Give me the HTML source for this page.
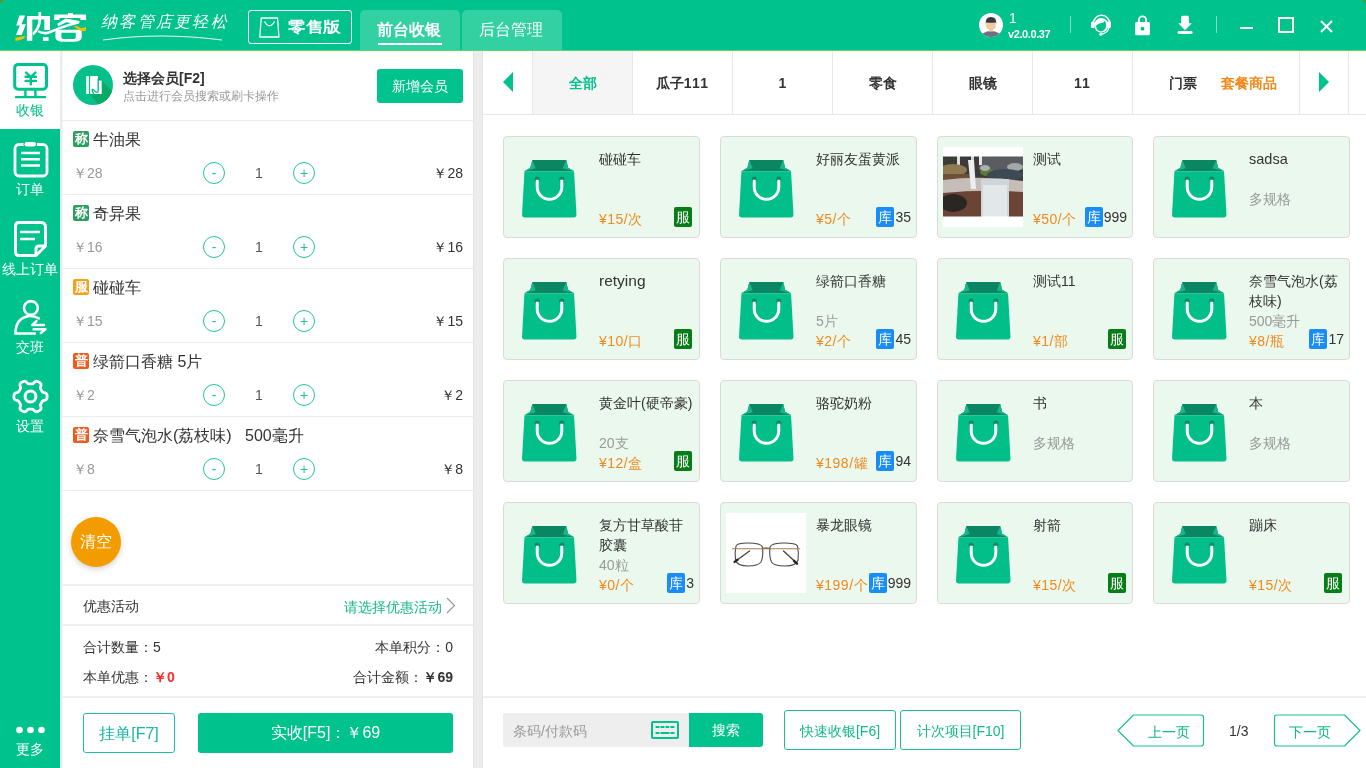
<!DOCTYPE html>
<html><head><meta charset="utf-8"><style>
*{margin:0;padding:0;box-sizing:border-box;}
html,body{width:1366px;height:768px;overflow:hidden;background:#fff;font-family:"Liberation Sans",sans-serif;color:#333;}
.a{position:absolute;}
.t{position:absolute;white-space:nowrap;line-height:20px;}
.g{background:#ececec;}
.card{position:absolute;width:197px;height:102px;background:#ebf8ee;border:1px solid #dadada;border-radius:4px;}
.card .nm{position:absolute;left:95px;top:12px;width:96px;font-size:14px;line-height:20px;color:#333;white-space:normal;}
.card .sp{position:absolute;left:95px;top:52px;font-size:14px;line-height:20px;color:#999;white-space:nowrap;}
.card .pr{position:absolute;left:95px;top:72px;font-size:14px;line-height:20px;color:#f0891e;white-space:nowrap;letter-spacing:0.5px;}
.card .bag{position:absolute;left:18px;top:23px;}
.card .fu{position:absolute;left:170px;top:70px;width:18px;height:20px;background:#067d17;border-radius:2px;color:#fff;font-size:14px;line-height:20px;text-align:center;}
.card .ku{position:absolute;right:5px;top:70px;height:20px;white-space:nowrap;font-size:14px;line-height:20px;color:#333;}
.card .ku b{display:inline-block;width:18px;height:20px;background:#1a8cf5;border-radius:2px;color:#fff;font-size:14px;line-height:20px;text-align:center;font-weight:normal;margin-right:1px;vertical-align:top;}
.row{position:absolute;left:62px;width:411px;height:74px;border-bottom:1px solid #ececec;}
.row .bd{position:absolute;left:11px;top:10px;width:16px;height:16px;border-radius:2px;color:#fff;font-size:13px;line-height:16px;text-align:center;font-weight:bold;}
.row .nm{position:absolute;left:31px;top:9px;font-size:16px;line-height:20px;color:#333;white-space:nowrap;}
.row .up{position:absolute;left:11px;top:42px;font-size:14px;line-height:20px;color:#999;white-space:nowrap;}
.row .mi,.row .pl{position:absolute;top:41px;width:22px;height:22px;border:1px solid #20c49a;border-radius:50%;color:#20c49a;text-align:center;font-size:14px;line-height:20px;}
.row .mi{left:141px;}
.row .pl{left:231px;}
.row .q{position:absolute;left:193px;top:42px;font-size:14px;line-height:20px;color:#555;}
.row .tp{position:absolute;right:10px;top:42px;font-size:14px;line-height:20px;color:#333;white-space:nowrap;}
.tab{position:absolute;top:51px;height:63px;border-right:1px solid #e8e8e8;font-size:14px;font-weight:bold;line-height:65px;text-align:center;color:#333;}
.stx{position:absolute;left:0;width:60px;text-align:center;color:#fff;font-size:14px;line-height:14px;white-space:nowrap;}
</style></head><body><div id="root" style="position:absolute;left:0;top:0;width:1366px;height:768px;overflow:hidden;will-change:transform;-webkit-font-smoothing:antialiased;">
<div class="a" style="left:0;top:0;width:6px;height:6px;background:#6c8c0c;"></div><div class="a" style="left:1360px;top:0;width:6px;height:6px;background:#6c8c0c;"></div>
<div class="a" style="left:0;top:0;width:1366px;height:51px;background:#00c28c;border-radius:5px 5px 0 0;"></div>
<svg class="a" style="left:0;top:0;" width="100" height="50" viewBox="0 0 100 50"><g fill="#fff"><path d="M19.4,15.4 H25.1 L21.4,24.3 H25.9 L21.7,34.9 H16 L19.8,25.6 H16.2 Z"/><path d="M27,16 H50 V30 H44.3 V19.6 H32.3 V40.8 H26.9 Z"/><path d="M38.4,12 H41.2 V19 Q41,29 33.5,35.5 L32.3,33 Q38.4,27 38.4,19 Z"/><rect x="42.9" y="37.2" width="5.7" height="3.7"/><rect x="68" y="13" width="4.8" height="3"/><path d="M54.2,14.4 H86.1 V20.1 H80.4 V17.9 H59.6 V20.1 H54.2 Z"/><path d="M57.2,23.8 L65.8,18.6 L79.5,21 L79.2,23.6 Q62,28 50,33.5 Q43,36 37.5,32 L38.8,30.3 Q43.5,33 49,31 Q60,26.5 71,23 L66.2,22.2 L58.5,26.3 Z"/><path d="M55.4,29.8 H81.7 V37 Q81.7,41.8 74,41.8 H63 Q55.4,41.8 55.4,37 Z M61.4,32.8 V37.5 Q61.4,39 64,39 H73 Q75.7,39 75.7,37.5 V32.8 Z" fill-rule="evenodd"/></g><g fill="#f5c000"><path d="M15.2,37.9 Q20,36.8 25.4,36 L24,38.6 Q20,40.2 15.5,41 Z"/><path d="M73.7,26 Q77,25.3 80,27.8 Q83,28.5 86.1,26.8 L85.8,30.8 Q81,31.5 78.5,29.8 Q76,28 73.7,26 Z"/></g></svg>
<div class="t" style="left:101px;top:12px;font-family:'Liberation Serif',serif;font-style:italic;font-size:16px;line-height:20px;color:#fff;letter-spacing:2.3px;">纳客管店更轻松</div>
<svg class="a" style="left:100px;top:33px;" width="130" height="10" viewBox="0 0 130 10"><path d="M3,7 Q60,-1 122,7" stroke="#fff" stroke-width="1.2" fill="none" opacity="0.9"/></svg>
<div class="a" style="left:248px;top:10px;width:104px;height:34px;border:1px solid #fff;border-radius:3px;"></div>
<svg class="a" style="left:259px;top:17px;" width="21" height="21" viewBox="0 0 21 21"><path d="M2.2,1 H18.6 L19.9,20 H0.8 Z" stroke="#fff" stroke-width="1.3" fill="none" stroke-linejoin="round"/><path d="M5.5,4.5 Q10.4,13 15.6,4.5" stroke="#fff" stroke-width="1.3" fill="none"/></svg>
<div class="t" style="left:288px;top:17px;font-size:15px;line-height:20px;font-weight:bold;color:#fff;transform:scaleX(1.18);transform-origin:0 0;">零售版</div>
<div class="a" style="left:360px;top:10px;width:100px;height:41px;background:#33d1a2;border-radius:5px 5px 0 0;"></div>
<div class="a" style="left:462px;top:10px;width:100px;height:41px;background:#33d1a2;border-radius:5px 5px 0 0;"></div>
<div class="t" style="left:377px;top:20px;font-size:16px;line-height:20px;font-weight:bold;color:#fff;">前台收银</div>
<div class="a" style="left:378px;top:43px;width:64px;height:2px;background:#fff;"></div>
<div class="t" style="left:479px;top:20px;font-size:16px;line-height:20px;color:#fff;">后台管理</div>
<div class="a" style="left:0;top:50px;width:1366px;height:1px;background:#55d872;"></div>
<svg class="a" style="left:979px;top:13px;" width="24" height="24" viewBox="0 0 24 24"><defs><clipPath id="avc"><circle cx="12" cy="12" r="12"/></clipPath></defs><circle cx="12" cy="12" r="12" fill="#fff"/><g clip-path="url(#avc)"><ellipse cx="12" cy="26" rx="11" ry="8" fill="#6e6f80"/><rect x="10.2" y="15" width="3.6" height="3.6" fill="#f3c59c"/><ellipse cx="11.9" cy="12.6" rx="4.9" ry="4.5" fill="#f5c9a0"/><path d="M6.8,11.8 Q5.8,4.1 12,4.1 Q18,4.1 17.2,11.5 L16.6,9.6 Q12,10.2 7.4,9.4 Z" fill="#3a3a3c"/></g></svg>
<div class="t" style="left:1009px;top:8px;font-size:14px;line-height:20px;color:#fff;">1</div>
<div class="t" style="left:1008px;top:27px;font-size:11px;line-height:14px;color:#fff;font-weight:bold;letter-spacing:-0.4px;">v2.0.0.37</div>
<div class="a" style="left:1070px;top:16px;width:1px;height:17px;background:#7fe0c0;"></div>
<svg class="a" style="left:1085px;top:10px;" width="32" height="30" viewBox="0 0 32 30"><path d="M8,14.5 A8.5,9.2 0 0 1 25,14.5" stroke="#fff" stroke-width="1.6" fill="none"/><rect x="6" y="11.7" width="3.6" height="6.4" rx="1" fill="#fff"/><rect x="22" y="11.5" width="3.8" height="6.6" rx="1" fill="#fff"/><circle cx="16.3" cy="15.3" r="7.2" fill="#fff"/><path d="M11.2,15.3 Q14,13 18.5,12.5 L19.8,10.8 Q21.2,13 21,15.5 Q20.8,20.5 16.2,21.5 Q11.5,21 11.2,16.5 Z" fill="#00c28c"/><path d="M24,17.5 Q23.2,22.8 16.5,24.2" stroke="#fff" stroke-width="1.4" fill="none"/><circle cx="15.8" cy="24.2" r="1.6" fill="#fff"/></svg>
<svg class="a" style="left:1134px;top:15px;" width="17" height="21" viewBox="0 0 17 21"><path d="M4.9,7.8 V5 A3.6,3.6 0 0 1 12.1,5 V7.8" stroke="#fff" stroke-width="1.9" fill="none"/><rect x="1.1" y="7.1" width="14.8" height="13.1" rx="1.2" fill="#fff"/><circle cx="8.5" cy="13.7" r="1.9" fill="#00c28c"/></svg>
<svg class="a" style="left:1177px;top:15px;" width="16" height="20" viewBox="0 0 16 20"><path d="M4.2,2.2 Q4.2,0.8 5.6,0.8 H10.5 Q11.9,0.8 11.9,2.2 V8.2 H14.8 L8,15.3 L1.3,8.2 H4.2 Z" fill="#fff"/><rect x="0.6" y="16.1" width="15" height="2.9" rx="1.4" fill="#fff"/></svg>
<div class="a" style="left:1216px;top:16px;width:1px;height:17px;background:#7fe0c0;"></div>
<div class="a" style="left:1240px;top:27px;width:13px;height:2px;background:#fff;"></div>
<div class="a" style="left:1278px;top:17px;width:16px;height:16px;border:2px solid #fffbe6;"></div>
<svg class="a" style="left:1320px;top:20px;" width="13" height="13" viewBox="0 0 13 13"><path d="M1,1 L12,12 M12,1 L1,12" stroke="#fff" stroke-width="2"/></svg>
<div class="a" style="left:0;top:51px;width:60px;height:717px;background:#00c28c;"></div>
<div class="a" style="left:0;top:51px;width:60px;height:78px;background:#fff;"></div>
<div class="a g" style="left:60px;top:51px;width:2px;height:717px;"></div>
<svg class="a" style="left:13px;top:62px;" width="36" height="37" viewBox="0 0 36 37"><rect x="1.7" y="2.4" width="31.8" height="24.9" rx="3.5" stroke="#00c28c" stroke-width="3" fill="none"/><path d="M13.2,10.6 L17.8,15 L22.4,10.6 M17.8,15 V22.3 M12.6,14.8 H23 M12.6,18.9 H23" stroke="#00c28c" stroke-width="2.4" fill="none" stroke-linecap="round" stroke-linejoin="round"/><path d="M12.4,28 V34.5 M22.4,28 V34.5" stroke="#00c28c" stroke-width="2.4"/><rect x="1.9" y="34" width="31.3" height="2.2" rx="1" fill="#00c28c"/></svg>
<div class="stx" style="top:103px;color:#00c28c;">收银</div>
<svg class="a" style="left:13px;top:141px;" width="36" height="37" viewBox="0 0 36 37"><rect x="2" y="3.5" width="32" height="31.5" rx="4" stroke="#fff" stroke-width="2.8" fill="none"/><rect x="10.5" y="0" width="13.5" height="6.5" rx="3.2" fill="#00c28c"/><rect x="11.5" y="1" width="11.5" height="4.6" rx="2.3" fill="#fff"/><path d="M8,12 H27 M8,18.2 H27 M8,24.6 H27" stroke="#fff" stroke-width="2.5"/></svg>
<div class="stx" style="top:182px;">订单</div>
<svg class="a" style="left:14px;top:221px;" width="33" height="36" viewBox="0 0 33 36"><path d="M5,1.5 H27 Q31.5,1.5 31.5,6 V25 L22,34.5 H5 Q1.5,34.5 1.5,31 V5 Q1.5,1.5 5,1.5 Z" stroke="#fff" stroke-width="3" fill="none" stroke-linejoin="round"/><path d="M31.5,25 H25 Q22,25 22,28 V34.5" stroke="#fff" stroke-width="3" fill="none"/><path d="M6,11 H26 M6,18 H21" stroke="#fff" stroke-width="2.5"/></svg>
<div class="stx" style="top:262px;font-size:14px;">线上订单</div>
<svg class="a" style="left:8px;top:296px;" width="44" height="44" viewBox="8 296 44 44"><circle cx="30.9" cy="308" r="6.9" stroke="#fff" stroke-width="2.6" fill="none"/><path d="M38.9,318.4 Q34,315.6 29,316 Q15.5,318 15.5,333.5 H34.8" stroke="#fff" stroke-width="2.6" fill="none" stroke-linecap="round"/><path d="M44,325 H32.3 L36.6,321 M33.5,329.3 H45.5 L40.8,333" stroke="#fff" stroke-width="2.4" fill="none" stroke-linecap="round" stroke-linejoin="round"/></svg>
<div class="stx" style="top:340px;">交班</div>
<svg class="a" style="left:12px;top:378px;" width="37" height="37" viewBox="0 0 37 37"><path d="M35.10,18.50 L35.08,19.08 L35.04,19.66 L34.95,20.23 L34.78,20.79 L34.49,21.32 L33.97,21.79 L33.12,22.14 L32.09,22.40 L31.23,22.64 L30.68,22.93 L30.33,23.28 L30.07,23.65 L29.85,24.03 L29.63,24.42 L29.41,24.80 L29.19,25.18 L28.96,25.56 L28.75,25.94 L28.55,26.35 L28.43,26.83 L28.45,27.46 L28.67,28.32 L28.96,29.34 L29.08,30.25 L28.94,30.94 L28.62,31.46 L28.22,31.88 L27.77,32.24 L27.29,32.57 L26.80,32.88 L26.29,33.15 L25.77,33.40 L25.23,33.61 L24.66,33.75 L24.05,33.76 L23.39,33.54 L22.65,32.98 L21.92,32.22 L21.28,31.60 L20.75,31.26 L20.28,31.13 L19.82,31.09 L19.38,31.09 L18.94,31.10 L18.50,31.10 L18.06,31.10 L17.62,31.09 L17.18,31.09 L16.72,31.13 L16.25,31.26 L15.72,31.60 L15.08,32.22 L14.35,32.98 L13.61,33.54 L12.95,33.76 L12.34,33.75 L11.77,33.61 L11.23,33.40 L10.71,33.15 L10.20,32.88 L9.71,32.57 L9.23,32.24 L8.78,31.88 L8.38,31.46 L8.06,30.94 L7.92,30.25 L8.04,29.34 L8.33,28.32 L8.55,27.46 L8.57,26.83 L8.45,26.35 L8.25,25.94 L8.04,25.56 L7.81,25.18 L7.59,24.80 L7.37,24.42 L7.15,24.03 L6.93,23.65 L6.67,23.28 L6.32,22.93 L5.77,22.64 L4.91,22.40 L3.88,22.14 L3.03,21.79 L2.51,21.32 L2.22,20.79 L2.05,20.23 L1.96,19.66 L1.92,19.08 L1.90,18.50 L1.92,17.92 L1.96,17.34 L2.05,16.77 L2.22,16.21 L2.51,15.68 L3.03,15.21 L3.88,14.86 L4.91,14.60 L5.77,14.36 L6.32,14.07 L6.67,13.72 L6.93,13.35 L7.15,12.97 L7.37,12.58 L7.59,12.20 L7.81,11.82 L8.04,11.44 L8.25,11.06 L8.45,10.65 L8.57,10.17 L8.55,9.54 L8.33,8.68 L8.04,7.66 L7.92,6.75 L8.06,6.06 L8.38,5.54 L8.78,5.12 L9.23,4.76 L9.71,4.43 L10.20,4.12 L10.71,3.85 L11.23,3.60 L11.77,3.39 L12.34,3.25 L12.95,3.24 L13.61,3.46 L14.35,4.02 L15.08,4.78 L15.72,5.40 L16.25,5.74 L16.72,5.87 L17.18,5.91 L17.62,5.91 L18.06,5.90 L18.50,5.90 L18.94,5.90 L19.38,5.91 L19.82,5.91 L20.28,5.87 L20.75,5.74 L21.28,5.40 L21.92,4.78 L22.65,4.02 L23.39,3.46 L24.05,3.24 L24.66,3.25 L25.23,3.39 L25.77,3.60 L26.29,3.85 L26.80,4.12 L27.29,4.43 L27.77,4.76 L28.22,5.12 L28.62,5.54 L28.94,6.06 L29.08,6.75 L28.96,7.66 L28.67,8.68 L28.45,9.54 L28.43,10.17 L28.55,10.65 L28.75,11.06 L28.96,11.44 L29.19,11.82 L29.41,12.20 L29.63,12.58 L29.85,12.97 L30.07,13.35 L30.33,13.72 L30.68,14.07 L31.23,14.36 L32.09,14.60 L33.12,14.86 L33.97,15.21 L34.49,15.68 L34.78,16.21 L34.95,16.77 L35.04,17.34 L35.08,17.92 Z" stroke="#fff" stroke-width="2.8" fill="none" stroke-linejoin="round"/><circle cx="18.5" cy="18.5" r="5.4" stroke="#fff" stroke-width="3" fill="none"/></svg>
<div class="stx" style="top:419px;">设置</div>
<svg class="a" style="left:16px;top:726px;" width="29" height="8" viewBox="0 0 29 8"><circle cx="3.5" cy="4" r="3.3" fill="#fff"/><circle cx="14.5" cy="4" r="3.3" fill="#fff"/><circle cx="25.5" cy="4" r="3.3" fill="#fff"/></svg>
<div class="stx" style="top:742px;">更多</div>
<div class="a" style="left:62px;top:51px;width:1px;height:717px;background:#f3f3f3;"></div>
<svg class="a" style="left:73px;top:65px;" width="40" height="40" viewBox="0 0 40 40"><defs><clipPath id="mc"><circle cx="20" cy="20" r="20"/></clipPath></defs><circle cx="20" cy="20" r="20" fill="#05c08a"/><g clip-path="url(#mc)"><path d="M24.8,11.5 L28.7,15.6 L48,35 L33,50 L17.1,29 Z" fill="#07ab66"/></g><g fill="#fff"><rect x="13.2" y="11.1" width="2.7" height="18" rx="0.6"/><rect x="17.1" y="11.1" width="8" height="18" rx="0.8"/><rect x="24" y="15.6" width="4.7" height="13.4" rx="0.6"/></g><path d="M25.2,13.5 V25.5 Q25,28.5 22.6,26.8 L20.6,25 Q18.6,23.6 19.4,26.2 L21.2,29.8" stroke="#05c08a" stroke-width="1.4" fill="none"/></svg>
<div class="t" style="left:123px;top:68px;font-size:14px;line-height:20px;font-weight:bold;color:#333;">选择会员[F2]</div>
<div class="t" style="left:123px;top:87px;font-size:12px;line-height:18px;color:#999;">点击进行会员搜索或刷卡操作</div>
<div class="a" style="left:377px;top:69px;width:86px;height:34px;background:#00c28c;border-radius:3px;color:#fff;font-size:14px;line-height:34px;text-align:center;">新增会员</div>
<div class="a" style="left:62px;top:120px;width:411px;height:1px;background:#ececec;"></div>
<div class="row" style="top:121px;"><div class="bd" style="background:#2c9e5f;">称</div><div class="nm">牛油果</div><div class="up">￥28</div><div class="mi">-</div><div class="q">1</div><div class="pl">+</div><div class="tp">￥28</div></div>
<div class="row" style="top:195px;"><div class="bd" style="background:#2c9e5f;">称</div><div class="nm">奇异果</div><div class="up">￥16</div><div class="mi">-</div><div class="q">1</div><div class="pl">+</div><div class="tp">￥16</div></div>
<div class="row" style="top:269px;"><div class="bd" style="background:#f4a21c;">服</div><div class="nm">碰碰车</div><div class="up">￥15</div><div class="mi">-</div><div class="q">1</div><div class="pl">+</div><div class="tp">￥15</div></div>
<div class="row" style="top:343px;"><div class="bd" style="background:#f25a1c;">普</div><div class="nm">绿箭口香糖 5片</div><div class="up">￥2</div><div class="mi">-</div><div class="q">1</div><div class="pl">+</div><div class="tp">￥2</div></div>
<div class="row" style="top:417px;"><div class="bd" style="background:#f25a1c;">普</div><div class="nm">奈雪气泡水(荔枝味)&nbsp;&nbsp;&nbsp;500毫升</div><div class="up">￥8</div><div class="mi">-</div><div class="q">1</div><div class="pl">+</div><div class="tp">￥8</div></div>
<div class="a" style="left:71px;top:517px;width:50px;height:50px;border-radius:50%;background:#f39c00;box-shadow:0 2px 6px rgba(0,0,0,0.18);color:#fff;font-size:16px;line-height:50px;text-align:center;">清空</div>
<div class="a" style="left:62px;top:584px;width:411px;height:2px;background:#efefef;"></div>
<div class="t" style="left:83px;top:596px;font-size:14px;line-height:20px;color:#333;">优惠活动</div>
<div class="t" style="left:344px;top:597px;font-size:14px;line-height:20px;color:#13b98a;">请选择优惠活动</div>
<svg class="a" style="left:446px;top:597px;" width="10" height="17" viewBox="0 0 10 17"><path d="M1,1 L8.5,8.5 L1,16" stroke="#999" stroke-width="1.2" fill="none"/></svg>
<div class="a" style="left:62px;top:624px;width:411px;height:2px;background:#efefef;"></div>
<div class="t" style="left:83px;top:637px;font-size:14px;line-height:20px;color:#333;">合计数量：5</div>
<div class="t" style="right:913px;top:637px;font-size:14px;line-height:20px;color:#333;">本单积分：0</div>
<div class="t" style="left:83px;top:667px;font-size:14px;line-height:20px;color:#333;">本单优惠：<b style="color:#ff2b2b;">￥0</b></div>
<div class="t" style="right:913px;top:667px;font-size:14px;line-height:20px;color:#333;">合计金额：<b>￥69</b></div>
<div class="a" style="left:62px;top:696px;width:411px;height:2px;background:#efefef;"></div>
<div class="a" style="left:83px;top:713px;width:92px;height:40px;border:1px solid #1cbfae;border-radius:3px;color:#16b7a5;font-size:16px;line-height:40px;text-align:center;">挂单[F7]</div>
<div class="a" style="left:198px;top:713px;width:255px;height:40px;background:#00c28c;border-radius:3px;color:#fff;font-size:16px;line-height:40px;text-align:center;">实收[F5]：￥69</div>
<div class="a g" style="left:473px;top:51px;width:10px;height:717px;border-left:1px solid #e2e2e2;border-right:1px solid #e2e2e2;"></div>
<div class="a" style="left:483px;top:114px;width:883px;height:1px;background:#e8e8e8;"></div>
<div class="tab" style="left:483px;width:50px;"></div>
<svg class="a" style="left:503px;top:72px;" width="11" height="20" viewBox="0 0 11 20"><path d="M10,0 V20 L0,10 Z" fill="#00c28c"/></svg>
<div class="tab" style="left:533px;width:100px;background:#f5f5f5;color:#00c28c;">全部</div>
<div class="tab" style="left:633px;width:100px;">瓜子<span style="letter-spacing:1.2px">111</span></div>
<div class="tab" style="left:733px;width:100px;">1</div>
<div class="tab" style="left:833px;width:100px;">零食</div>
<div class="tab" style="left:933px;width:100px;">眼镜</div>
<div class="tab" style="left:1033px;width:100px;"><span style="letter-spacing:1px">11</span></div>
<div class="tab" style="left:1133px;width:167px;text-align:left;"><span style="position:absolute;left:36px;">门票</span><span style="position:absolute;left:88px;color:#f08a1c;">套餐商品</span></div>
<div class="tab" style="left:1300px;width:49px;"></div>
<svg class="a" style="left:1319px;top:72px;" width="11" height="20" viewBox="0 0 11 20"><path d="M0,0 V20 L10,10 Z" fill="#00c28c"/></svg>
<div class="card" style="left:503px;top:136px;width:197px;"><svg class="bag" width="55" height="58" viewBox="0 0 56 59" preserveAspectRatio="none"><path d="M10.5,0 H45 L47,8 L53,11.5 H2.5 L8.5,8 Z" fill="#0a8762"/><path d="M10.5,0 L14,8.5 L2.5,11.5 L8.5,8 Z" fill="#16b888"/><path d="M45,0 L41.5,8.5 L53,11.5 L47,8 Z" fill="#16b888"/><path d="M2.5,11.5 H53 L55.5,56 Q55.5,58.5 53,58.5 H2.5 Q0,58.5 0,56 Z" fill="#02bf8a"/><circle cx="15.5" cy="19.5" r="2.6" fill="#0a8a64"/><circle cx="40.5" cy="19.5" r="2.6" fill="#0a8a64"/><path d="M15.5,20 V27.5 A12.5,12.5 0 0 0 40.5,27.5 V20" stroke="#fff" stroke-width="3" fill="none"/></svg><div class="nm">碰碰车</div><div class="pr">¥15/次</div><div class="fu">服</div></div>
<div class="card" style="left:720px;top:136px;width:197px;"><svg class="bag" width="55" height="58" viewBox="0 0 56 59" preserveAspectRatio="none"><path d="M10.5,0 H45 L47,8 L53,11.5 H2.5 L8.5,8 Z" fill="#0a8762"/><path d="M10.5,0 L14,8.5 L2.5,11.5 L8.5,8 Z" fill="#16b888"/><path d="M45,0 L41.5,8.5 L53,11.5 L47,8 Z" fill="#16b888"/><path d="M2.5,11.5 H53 L55.5,56 Q55.5,58.5 53,58.5 H2.5 Q0,58.5 0,56 Z" fill="#02bf8a"/><circle cx="15.5" cy="19.5" r="2.6" fill="#0a8a64"/><circle cx="40.5" cy="19.5" r="2.6" fill="#0a8a64"/><path d="M15.5,20 V27.5 A12.5,12.5 0 0 0 40.5,27.5 V20" stroke="#fff" stroke-width="3" fill="none"/></svg><div class="nm">好丽友蛋黄派</div><div class="pr">¥5/个</div><div class="ku"><b>库</b>35</div></div>
<div class="card" style="left:937px;top:136px;width:196px;"><svg class="a" style="left:5px;top:10px;" width="80" height="80" viewBox="0 0 80 80"><defs><filter id="bl" x="0" y="0" width="1" height="1"><feGaussianBlur stdDeviation="0.7"/></filter><clipPath id="pc"><rect y="9.5" width="80" height="60"/></clipPath></defs><rect width="80" height="80" fill="#fff"/><g clip-path="url(#pc)" filter="url(#bl)"><rect y="9" width="80" height="62" fill="#3c3a38"/><rect x="36" y="9" width="44" height="14" fill="#5a5c5e"/><rect x="14" y="9" width="3" height="10" fill="#e0e0e0"/><rect x="28" y="9" width="3" height="9" fill="#d0d4d8"/><rect x="36" y="9" width="3" height="9" fill="#e8e8e8"/><ellipse cx="10" cy="23" rx="14" ry="6" fill="#8f7a52"/><rect x="0" y="27" width="28" height="6" fill="#6e5038"/><ellipse cx="44" cy="25" rx="7" ry="4" fill="#5e7a3a"/><ellipse cx="42" cy="21" rx="5" ry="3" fill="#a8b0b0"/><ellipse cx="72" cy="20" rx="8" ry="4" fill="#a0a8a8"/><ellipse cx="62" cy="28" rx="18" ry="6" fill="#3e4a52"/><path d="M0,33 Q40,28 80,34 V52 H0 Z" fill="#c6bcb8"/><path d="M0,46 Q40,42 80,45 V70 H0 Z" fill="#6a4436"/><ellipse cx="10" cy="56" rx="14" ry="9" fill="#2c2622"/><path d="M25,13 L31,13 L33,42 L28,42 Z" fill="#eceef0"/><rect x="38" y="32" width="28" height="38" fill="#cfd6da"/><rect x="40" y="38" width="24" height="32" fill="#e2e8ea"/></g></svg><div class="nm">测试</div><div class="pr">¥50/个</div><div class="ku"><b>库</b>999</div></div>
<div class="card" style="left:1153px;top:136px;width:197px;"><svg class="bag" width="55" height="58" viewBox="0 0 56 59" preserveAspectRatio="none"><path d="M10.5,0 H45 L47,8 L53,11.5 H2.5 L8.5,8 Z" fill="#0a8762"/><path d="M10.5,0 L14,8.5 L2.5,11.5 L8.5,8 Z" fill="#16b888"/><path d="M45,0 L41.5,8.5 L53,11.5 L47,8 Z" fill="#16b888"/><path d="M2.5,11.5 H53 L55.5,56 Q55.5,58.5 53,58.5 H2.5 Q0,58.5 0,56 Z" fill="#02bf8a"/><circle cx="15.5" cy="19.5" r="2.6" fill="#0a8a64"/><circle cx="40.5" cy="19.5" r="2.6" fill="#0a8a64"/><path d="M15.5,20 V27.5 A12.5,12.5 0 0 0 40.5,27.5 V20" stroke="#fff" stroke-width="3" fill="none"/></svg><div class="nm"><span style="font-size:14.5px">sadsa</span></div><div class="sp">多规格</div></div>
<div class="card" style="left:503px;top:258px;width:197px;"><svg class="bag" width="55" height="58" viewBox="0 0 56 59" preserveAspectRatio="none"><path d="M10.5,0 H45 L47,8 L53,11.5 H2.5 L8.5,8 Z" fill="#0a8762"/><path d="M10.5,0 L14,8.5 L2.5,11.5 L8.5,8 Z" fill="#16b888"/><path d="M45,0 L41.5,8.5 L53,11.5 L47,8 Z" fill="#16b888"/><path d="M2.5,11.5 H53 L55.5,56 Q55.5,58.5 53,58.5 H2.5 Q0,58.5 0,56 Z" fill="#02bf8a"/><circle cx="15.5" cy="19.5" r="2.6" fill="#0a8a64"/><circle cx="40.5" cy="19.5" r="2.6" fill="#0a8a64"/><path d="M15.5,20 V27.5 A12.5,12.5 0 0 0 40.5,27.5 V20" stroke="#fff" stroke-width="3" fill="none"/></svg><div class="nm"><span style="font-size:15.5px">retying</span></div><div class="pr">¥10/口</div><div class="fu">服</div></div>
<div class="card" style="left:720px;top:258px;width:197px;"><svg class="bag" width="55" height="58" viewBox="0 0 56 59" preserveAspectRatio="none"><path d="M10.5,0 H45 L47,8 L53,11.5 H2.5 L8.5,8 Z" fill="#0a8762"/><path d="M10.5,0 L14,8.5 L2.5,11.5 L8.5,8 Z" fill="#16b888"/><path d="M45,0 L41.5,8.5 L53,11.5 L47,8 Z" fill="#16b888"/><path d="M2.5,11.5 H53 L55.5,56 Q55.5,58.5 53,58.5 H2.5 Q0,58.5 0,56 Z" fill="#02bf8a"/><circle cx="15.5" cy="19.5" r="2.6" fill="#0a8a64"/><circle cx="40.5" cy="19.5" r="2.6" fill="#0a8a64"/><path d="M15.5,20 V27.5 A12.5,12.5 0 0 0 40.5,27.5 V20" stroke="#fff" stroke-width="3" fill="none"/></svg><div class="nm">绿箭口香糖</div><div class="sp">5片</div><div class="pr">¥2/个</div><div class="ku"><b>库</b>45</div></div>
<div class="card" style="left:937px;top:258px;width:196px;"><svg class="bag" width="55" height="58" viewBox="0 0 56 59" preserveAspectRatio="none"><path d="M10.5,0 H45 L47,8 L53,11.5 H2.5 L8.5,8 Z" fill="#0a8762"/><path d="M10.5,0 L14,8.5 L2.5,11.5 L8.5,8 Z" fill="#16b888"/><path d="M45,0 L41.5,8.5 L53,11.5 L47,8 Z" fill="#16b888"/><path d="M2.5,11.5 H53 L55.5,56 Q55.5,58.5 53,58.5 H2.5 Q0,58.5 0,56 Z" fill="#02bf8a"/><circle cx="15.5" cy="19.5" r="2.6" fill="#0a8a64"/><circle cx="40.5" cy="19.5" r="2.6" fill="#0a8a64"/><path d="M15.5,20 V27.5 A12.5,12.5 0 0 0 40.5,27.5 V20" stroke="#fff" stroke-width="3" fill="none"/></svg><div class="nm">测试11</div><div class="pr">¥1/部</div><div class="fu">服</div></div>
<div class="card" style="left:1153px;top:258px;width:197px;"><svg class="bag" width="55" height="58" viewBox="0 0 56 59" preserveAspectRatio="none"><path d="M10.5,0 H45 L47,8 L53,11.5 H2.5 L8.5,8 Z" fill="#0a8762"/><path d="M10.5,0 L14,8.5 L2.5,11.5 L8.5,8 Z" fill="#16b888"/><path d="M45,0 L41.5,8.5 L53,11.5 L47,8 Z" fill="#16b888"/><path d="M2.5,11.5 H53 L55.5,56 Q55.5,58.5 53,58.5 H2.5 Q0,58.5 0,56 Z" fill="#02bf8a"/><circle cx="15.5" cy="19.5" r="2.6" fill="#0a8a64"/><circle cx="40.5" cy="19.5" r="2.6" fill="#0a8a64"/><path d="M15.5,20 V27.5 A12.5,12.5 0 0 0 40.5,27.5 V20" stroke="#fff" stroke-width="3" fill="none"/></svg><div class="nm">奈雪气泡水(荔枝味)</div><div class="sp">500毫升</div><div class="pr">¥8/瓶</div><div class="ku"><b>库</b>17</div></div>
<div class="card" style="left:503px;top:380px;width:197px;"><svg class="bag" width="55" height="58" viewBox="0 0 56 59" preserveAspectRatio="none"><path d="M10.5,0 H45 L47,8 L53,11.5 H2.5 L8.5,8 Z" fill="#0a8762"/><path d="M10.5,0 L14,8.5 L2.5,11.5 L8.5,8 Z" fill="#16b888"/><path d="M45,0 L41.5,8.5 L53,11.5 L47,8 Z" fill="#16b888"/><path d="M2.5,11.5 H53 L55.5,56 Q55.5,58.5 53,58.5 H2.5 Q0,58.5 0,56 Z" fill="#02bf8a"/><circle cx="15.5" cy="19.5" r="2.6" fill="#0a8a64"/><circle cx="40.5" cy="19.5" r="2.6" fill="#0a8a64"/><path d="M15.5,20 V27.5 A12.5,12.5 0 0 0 40.5,27.5 V20" stroke="#fff" stroke-width="3" fill="none"/></svg><div class="nm">黄金叶(硬帝豪)</div><div class="sp">20支</div><div class="pr">¥12/盒</div><div class="fu">服</div></div>
<div class="card" style="left:720px;top:380px;width:197px;"><svg class="bag" width="55" height="58" viewBox="0 0 56 59" preserveAspectRatio="none"><path d="M10.5,0 H45 L47,8 L53,11.5 H2.5 L8.5,8 Z" fill="#0a8762"/><path d="M10.5,0 L14,8.5 L2.5,11.5 L8.5,8 Z" fill="#16b888"/><path d="M45,0 L41.5,8.5 L53,11.5 L47,8 Z" fill="#16b888"/><path d="M2.5,11.5 H53 L55.5,56 Q55.5,58.5 53,58.5 H2.5 Q0,58.5 0,56 Z" fill="#02bf8a"/><circle cx="15.5" cy="19.5" r="2.6" fill="#0a8a64"/><circle cx="40.5" cy="19.5" r="2.6" fill="#0a8a64"/><path d="M15.5,20 V27.5 A12.5,12.5 0 0 0 40.5,27.5 V20" stroke="#fff" stroke-width="3" fill="none"/></svg><div class="nm">骆驼奶粉</div><div class="pr">¥198/罐</div><div class="ku"><b>库</b>94</div></div>
<div class="card" style="left:937px;top:380px;width:196px;"><svg class="bag" width="55" height="58" viewBox="0 0 56 59" preserveAspectRatio="none"><path d="M10.5,0 H45 L47,8 L53,11.5 H2.5 L8.5,8 Z" fill="#0a8762"/><path d="M10.5,0 L14,8.5 L2.5,11.5 L8.5,8 Z" fill="#16b888"/><path d="M45,0 L41.5,8.5 L53,11.5 L47,8 Z" fill="#16b888"/><path d="M2.5,11.5 H53 L55.5,56 Q55.5,58.5 53,58.5 H2.5 Q0,58.5 0,56 Z" fill="#02bf8a"/><circle cx="15.5" cy="19.5" r="2.6" fill="#0a8a64"/><circle cx="40.5" cy="19.5" r="2.6" fill="#0a8a64"/><path d="M15.5,20 V27.5 A12.5,12.5 0 0 0 40.5,27.5 V20" stroke="#fff" stroke-width="3" fill="none"/></svg><div class="nm">书</div><div class="sp">多规格</div></div>
<div class="card" style="left:1153px;top:380px;width:197px;"><svg class="bag" width="55" height="58" viewBox="0 0 56 59" preserveAspectRatio="none"><path d="M10.5,0 H45 L47,8 L53,11.5 H2.5 L8.5,8 Z" fill="#0a8762"/><path d="M10.5,0 L14,8.5 L2.5,11.5 L8.5,8 Z" fill="#16b888"/><path d="M45,0 L41.5,8.5 L53,11.5 L47,8 Z" fill="#16b888"/><path d="M2.5,11.5 H53 L55.5,56 Q55.5,58.5 53,58.5 H2.5 Q0,58.5 0,56 Z" fill="#02bf8a"/><circle cx="15.5" cy="19.5" r="2.6" fill="#0a8a64"/><circle cx="40.5" cy="19.5" r="2.6" fill="#0a8a64"/><path d="M15.5,20 V27.5 A12.5,12.5 0 0 0 40.5,27.5 V20" stroke="#fff" stroke-width="3" fill="none"/></svg><div class="nm">本</div><div class="sp">多规格</div></div>
<div class="card" style="left:503px;top:502px;width:197px;"><svg class="bag" width="55" height="58" viewBox="0 0 56 59" preserveAspectRatio="none"><path d="M10.5,0 H45 L47,8 L53,11.5 H2.5 L8.5,8 Z" fill="#0a8762"/><path d="M10.5,0 L14,8.5 L2.5,11.5 L8.5,8 Z" fill="#16b888"/><path d="M45,0 L41.5,8.5 L53,11.5 L47,8 Z" fill="#16b888"/><path d="M2.5,11.5 H53 L55.5,56 Q55.5,58.5 53,58.5 H2.5 Q0,58.5 0,56 Z" fill="#02bf8a"/><circle cx="15.5" cy="19.5" r="2.6" fill="#0a8a64"/><circle cx="40.5" cy="19.5" r="2.6" fill="#0a8a64"/><path d="M15.5,20 V27.5 A12.5,12.5 0 0 0 40.5,27.5 V20" stroke="#fff" stroke-width="3" fill="none"/></svg><div class="nm">复方甘草酸苷胶囊</div><div class="sp">40粒</div><div class="pr">¥0/个</div><div class="ku"><b>库</b>3</div></div>
<div class="card" style="left:720px;top:502px;width:197px;"><svg class="a" style="left:5px;top:10px;" width="80" height="80" viewBox="0 0 80 80"><rect width="80" height="80" fill="#fff"/><g fill="none" stroke-linecap="round"><path d="M10,33 Q11,30 22,30 Q35,30 36.5,34 Q37.5,44 35,49 Q32,53 22,53 Q11,53 9.5,47 Q8.5,40 10,33 Z" stroke="#4a4a4e" stroke-width="1.1"/><path d="M44,34 Q45.5,30 58,30 Q70,30 71.5,33 Q73,40 72,47 Q70.5,53 59,53 Q48,53 45.5,49 Q43,44 44,34 Z" stroke="#4a4a4e" stroke-width="1.1"/><path d="M6.5,35.8 H73.8" stroke="#9c8250" stroke-width="1.1"/><path d="M36.5,35.5 Q40,34.5 44,35.5" stroke="#8a7048" stroke-width="1.6"/><path d="M23.5,38 L10.5,47.5" stroke="#4a4038" stroke-width="1.3"/><path d="M57.5,38 L69,48.5" stroke="#4a4038" stroke-width="1.3"/><path d="M11.5,46.8 L8.6,48.9" stroke="#2a2420" stroke-width="2.4"/><path d="M68,47.8 L71,50.6" stroke="#2a2420" stroke-width="2.4"/></g></svg><div class="nm">暴龙眼镜</div><div class="pr">¥199/个</div><div class="ku"><b>库</b>999</div></div>
<div class="card" style="left:937px;top:502px;width:196px;"><svg class="bag" width="55" height="58" viewBox="0 0 56 59" preserveAspectRatio="none"><path d="M10.5,0 H45 L47,8 L53,11.5 H2.5 L8.5,8 Z" fill="#0a8762"/><path d="M10.5,0 L14,8.5 L2.5,11.5 L8.5,8 Z" fill="#16b888"/><path d="M45,0 L41.5,8.5 L53,11.5 L47,8 Z" fill="#16b888"/><path d="M2.5,11.5 H53 L55.5,56 Q55.5,58.5 53,58.5 H2.5 Q0,58.5 0,56 Z" fill="#02bf8a"/><circle cx="15.5" cy="19.5" r="2.6" fill="#0a8a64"/><circle cx="40.5" cy="19.5" r="2.6" fill="#0a8a64"/><path d="M15.5,20 V27.5 A12.5,12.5 0 0 0 40.5,27.5 V20" stroke="#fff" stroke-width="3" fill="none"/></svg><div class="nm">射箭</div><div class="pr">¥15/次</div><div class="fu">服</div></div>
<div class="card" style="left:1153px;top:502px;width:197px;"><svg class="bag" width="55" height="58" viewBox="0 0 56 59" preserveAspectRatio="none"><path d="M10.5,0 H45 L47,8 L53,11.5 H2.5 L8.5,8 Z" fill="#0a8762"/><path d="M10.5,0 L14,8.5 L2.5,11.5 L8.5,8 Z" fill="#16b888"/><path d="M45,0 L41.5,8.5 L53,11.5 L47,8 Z" fill="#16b888"/><path d="M2.5,11.5 H53 L55.5,56 Q55.5,58.5 53,58.5 H2.5 Q0,58.5 0,56 Z" fill="#02bf8a"/><circle cx="15.5" cy="19.5" r="2.6" fill="#0a8a64"/><circle cx="40.5" cy="19.5" r="2.6" fill="#0a8a64"/><path d="M15.5,20 V27.5 A12.5,12.5 0 0 0 40.5,27.5 V20" stroke="#fff" stroke-width="3" fill="none"/></svg><div class="nm">蹦床</div><div class="pr">¥15/次</div><div class="fu">服</div></div>
<div class="a" style="left:483px;top:696px;width:883px;height:2px;background:#efefef;"></div>
<div class="a" style="left:503px;top:713px;width:186px;height:34px;background:#eeeeee;border-radius:2px 0 0 2px;"></div>
<div class="t" style="left:513px;top:721px;font-size:14px;line-height:20px;color:#999;">条码/付款码</div>
<svg class="a" style="left:651px;top:721px;" width="28" height="18" viewBox="0 0 28 18"><rect x="1" y="1" width="26" height="16" rx="1" stroke="#00c28c" stroke-width="2" fill="none"/><path d="M5.3,6 H7.7 M10.2,6 H12.7 M15.3,6 H17.6 M20.2,6 H22.7 M5.3,12 H7.7 M10.2,12 H17.8 M20.2,12 H22.7" stroke="#00c28c" stroke-width="2" stroke-linecap="round"/></svg>
<div class="a" style="left:689px;top:713px;width:74px;height:34px;background:#00c28c;border-radius:0 3px 3px 0;color:#fff;font-size:14px;line-height:34px;text-align:center;">搜索</div>
<div class="a" style="left:784px;top:710px;width:112px;height:40px;border:1px solid #1cc18f;border-radius:3px;color:#13b98a;font-size:14px;line-height:40px;text-align:center;">快速收银[F6]</div>
<div class="a" style="left:900px;top:710px;width:121px;height:40px;border:1px solid #1cc18f;border-radius:3px;color:#13b98a;font-size:14px;line-height:40px;text-align:center;">计次项目[F10]</div>
<svg class="a" style="left:1117px;top:714px;" width="88" height="33" viewBox="0 0 88 33"><path d="M1,16.5 L16.5,1 H84 Q86.5,1 86.5,3.5 V29.5 Q86.5,32 84,32 H16.5 Z" stroke="#1cc18f" stroke-width="1.2" fill="none" stroke-linejoin="round"/></svg>
<div class="t" style="left:1148px;top:722px;font-size:14px;line-height:20px;color:#13b98a;">上一页</div>
<div class="t" style="left:1229px;top:721px;font-size:14px;line-height:20px;color:#333;">1/3</div>
<svg class="a" style="left:1273px;top:714px;" width="88" height="33" viewBox="0 0 88 33"><path d="M87,16.5 L71.5,1 H4 Q1.5,1 1.5,3.5 V29.5 Q1.5,32 4,32 H71.5 Z" stroke="#1cc18f" stroke-width="1.2" fill="none" stroke-linejoin="round"/></svg>
<div class="t" style="left:1289px;top:722px;font-size:14px;line-height:20px;color:#13b98a;">下一页</div>
</div></body></html>
